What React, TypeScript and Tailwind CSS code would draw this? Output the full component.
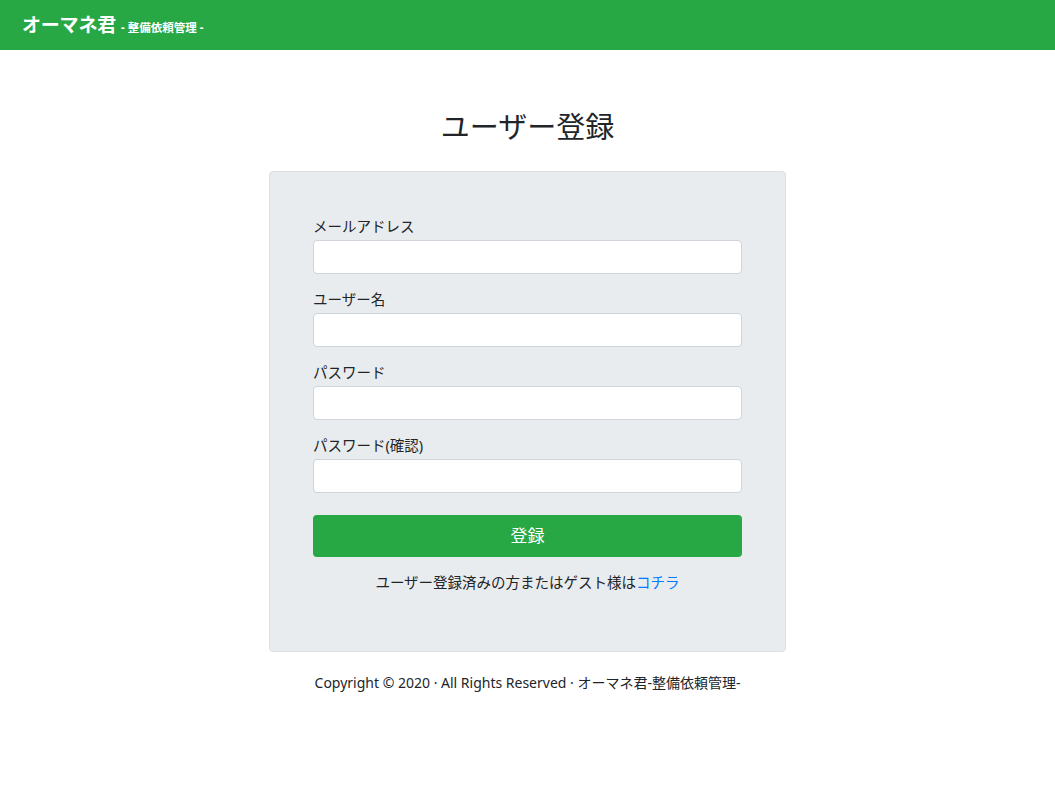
import React from "react";

const font = "font-['Noto_Sans','Noto_Sans_CJK_JP',sans-serif]";

function Field({ label, type = "text" }: { label: string; type?: string }) {
  return (
    <div className="flex flex-col">
      <label className="text-[14.5px] leading-[22px] mb-[3px] text-[#212529]">{label}</label>
      <input
        type={type}
        className="h-[34px] w-full rounded-[4px] border border-[#ced4da] bg-white px-3 outline-none"
      />
    </div>
  );
}

export default function App() {
  return (
    <div className={`min-h-screen bg-white text-[#212529] ${font}`}>
      {/* Navbar */}
      <header className="h-[50px] bg-[#28a745] flex items-center px-[22px]">
        <div className="flex items-baseline gap-[5px] text-white font-bold">
          <span className="text-[19px] tracking-[-0.2px]">オーマネ君</span>
          <span className="text-[11.5px]">- 整備依頼管理 -</span>
        </div>
      </header>

      <main className="flex flex-col items-center">
        <h2 className="mt-[57px] text-[29px] leading-[40px] font-normal">ユーザー登録</h2>

        <div className="mt-[24px] w-[517px] rounded-[4px] border border-[#dcdfe3] bg-[#e9ecef] px-[43px] pt-[43px] pb-[58px]">
          <div className="flex flex-col gap-[14px]">
            <Field label="メールアドレス" type="email" />
            <Field label="ユーザー名" />
            <Field label="パスワード" type="password" />
            <Field label="パスワード(確認)" type="password" />
          </div>

          <button className="mt-[22px] h-[42px] w-full rounded-[4px] bg-[#28a745] text-white text-[17px]">
            登録
          </button>

          <p className="mt-[14px] text-center text-[14.5px] leading-[22px]">
            ユーザー登録済みの方またはゲスト様は<a href="#" className="text-[#007bff]">コチラ</a>
          </p>
        </div>

        <footer className="mt-[21px] text-[14px] leading-[20px] text-[#212529]">
          Copyright © 2020 · All Rights Reserved · オーマネ君-整備依頼管理-
        </footer>
      </main>
    </div>
  );
}
